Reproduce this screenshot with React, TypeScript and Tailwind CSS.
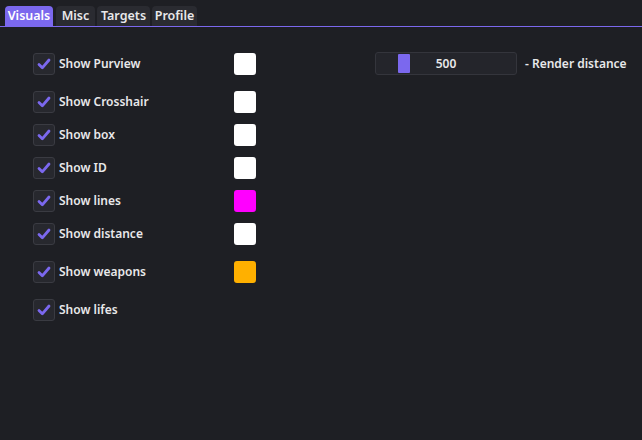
const tabs = [
    { label: 'Visuals', w: 'w-[48px]' },
    { label: 'Misc', w: 'w-[39px]' },
    { label: 'Targets', w: 'w-[53px]' },
    { label: 'Profile', w: 'w-[45px]' },
]

type Row = { label: string; color?: string; mt: string }

const rows: Row[] = [
    { label: 'Show Purview', color: '#ffffff', mt: 'mt-[25px]' },
    { label: 'Show Crosshair', color: '#ffffff', mt: 'mt-[16px]' },
    { label: 'Show box', color: '#ffffff', mt: 'mt-[11px]' },
    { label: 'Show ID', color: '#ffffff', mt: 'mt-[11px]' },
    { label: 'Show lines', color: '#ff00ff', mt: 'mt-[11px]' },
    { label: 'Show distance', color: '#ffffff', mt: 'mt-[11px]' },
    { label: 'Show weapons', color: '#ffb000', mt: 'mt-[16px]' },
    { label: 'Show lifes', mt: 'mt-[16px]' },
]

function Checkbox() {
    return (
        <div className="w-[22px] h-[22px] rounded-[3px] bg-[#27282e] border border-[#3a3b42] flex items-center justify-center">
            <svg width="16" height="16" viewBox="0 0 16 16">
                <polyline
                    points="3,8.5 6.3,11.8 13,4"
                    fill="none"
                    stroke="#7b68ee"
                    strokeWidth="2.8"
                    strokeLinecap="round"
                    strokeLinejoin="round"
                />
            </svg>
        </div>
    )
}

export default function App() {
    return (
        <div
            className="w-[642px] h-[440px] bg-[#1e1f24] text-[#e8e8ea] text-[12px] font-semibold overflow-hidden"
            style={{ fontFamily: '"Noto Sans", "Open Sans", sans-serif' }}
        >
            <div className="flex gap-[2px] pl-[5px] pt-[6px] border-b border-[#7b68ee]">
                {tabs.map((t, i) => (
                    <div
                        key={t.label}
                        className={
                            i === 0
                                ? `${t.w} mr-[1px] h-[20px] rounded-t-[4px] bg-[#7b68ee] text-white flex items-center justify-center leading-none text-[12.5px]`
                                : `${t.w} h-[20px] rounded-t-[4px] bg-[#2a2b31] text-[#e8e8ea] flex items-center justify-center leading-none text-[12.5px]`
                        }
                    >
                        {t.label}
                    </div>
                ))}
            </div>

            <div className="flex flex-col pl-[33px]">
                {rows.map((r, i) => (
                    <div key={r.label} className={`flex items-center ${r.mt}`}>
                        <div className="w-[201px] flex items-center gap-[4px]">
                            <Checkbox />
                            <span>{r.label}</span>
                        </div>
                        {r.color && (
                            <div
                                className="w-[22px] h-[22px] rounded-[3px]"
                                style={{ backgroundColor: r.color }}
                            />
                        )}
                        {i === 0 && (
                            <div className="flex items-center ml-[119px] gap-[8px]">
                                <div className="relative w-[142px] h-[23px] rounded-[3px] bg-[#24252b] border border-[#34353c] flex items-center justify-center">
                                    <div className="absolute left-[22px] top-[1px] w-[12px] h-[19px] rounded-[1px] bg-[#7b68ee]" />
                                    <span className="relative">500</span>
                                </div>
                                <span>- Render distance</span>
                            </div>
                        )}
                    </div>
                ))}
            </div>
        </div>
    )
}
